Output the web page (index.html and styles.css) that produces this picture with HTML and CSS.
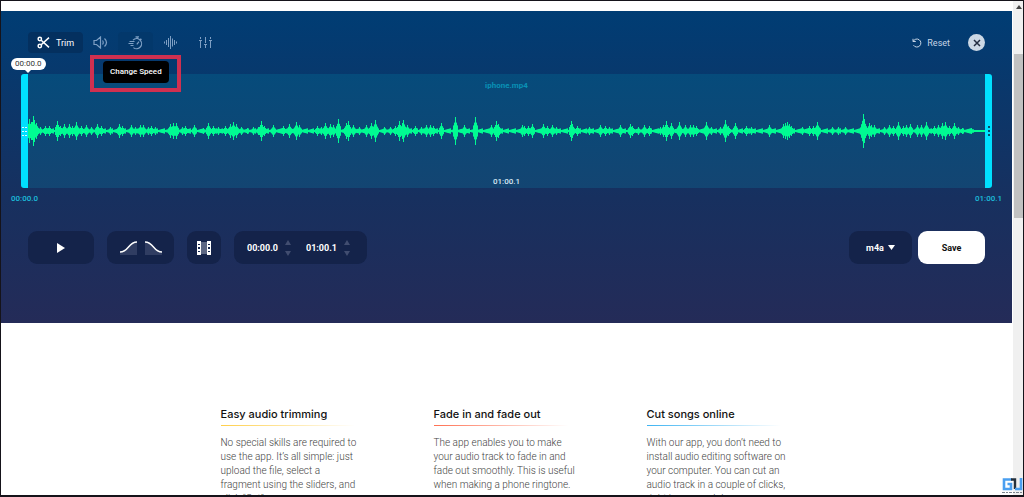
FILE: index.html
```html
<!DOCTYPE html>
<html lang="en">
<head>
<meta charset="utf-8">
<title>Audio Cutter</title>
<link rel="stylesheet" href="styles.css">
</head>
<body>
<div class="frame">
  <div class="page">
    <main class="editor">
      <div class="toolbar">
        <button class="tool tool-active" type="button">
          <svg width="13" height="13" viewBox="0 0 13 13" fill="none" stroke="#fff" stroke-width="1.5"><circle cx="2.8" cy="3" r="1.7"/><circle cx="2.8" cy="10" r="1.7"/><path d="M4.2 4.2 12 11.4M4.2 8.8 12 1.6"/></svg>
          Trim
        </button>
        <button class="tool" type="button" aria-label="Change volume">
          <svg width="15" height="13" viewBox="0 0 15 13" fill="none" stroke="currentColor" stroke-width="1.2"><path d="M1 4.5H3.5L7.5 1V12L3.5 8.5H1ZM9.5 4.5Q11 6.5 9.5 8.5M11.5 2.5Q15.5 6.5 11.5 10.5"/></svg>
        </button>
        <button class="tool tool-hover" type="button" aria-label="Change speed" aria-describedby="speed-tip">
          <svg width="15" height="14" viewBox="0 0 15 14" fill="none" stroke="currentColor" stroke-width="1.2"><path d="M5 4.2A5 5 0 1 1 5.4 11.6M7.5 .8H11M9.2 .8V2.5M12.3 2.7 13.5 3.8M1.5 5.5H6.5M.5 7.5H5.5M2.5 9.5H5.5M8.8 8.4 11 5.7"/></svg>
        </button>
        <button class="tool" type="button" aria-label="Change pitch">
          <svg width="13" height="13" viewBox="0 0 13 13" fill="none" stroke="currentColor"><path d="M.5 5.5V7.5M2.5 4V9M4.5 2V11M6.5 0V13M8.5 2.5V10.5M10.5 4V9M12.5 5.5V7.5"/></svg>
        </button>
        <button class="tool" type="button" aria-label="Equalizer">
          <svg width="13" height="13" viewBox="0 0 13 13" fill="none" stroke="currentColor"><path d="M1.5 1V3M1.5 5V12M6.5 1V7M6.5 9V12M11.5 1V3M11.5 5V12M0 4.5H3M5 8.5H8M10 4.5H13"/></svg>
        </button>
        <button class="reset" type="button">
          <svg width="10" height="10" viewBox="0 0 10 10" fill="none" stroke="currentColor"><path d="M1 .8V3.5H3.8M1.2 3.4A4 4 0 1 1 1.5 7.2"/></svg>
          Reset
        </button>
        <button class="close" type="button" aria-label="Close">
          <svg width="8" height="8" viewBox="0 0 8 8" stroke="#222c40" stroke-width="1.5"><path d="M1 1 7 7M7 1 1 7"/></svg>
        </button>
        <div class="tip-mark"><div class="tip" id="speed-tip" role="tooltip">Change Speed</div></div>
      </div>

      <div class="track">
        <span class="file">iphone.mp4</span>
        <svg class="wave" viewBox="0 0 957 114" preserveAspectRatio="none"><path id="wave" fill="none" stroke="#00fb92"/></svg>
        <span class="length">01:00.1</span>
        <div class="handle handle-start"><svg width="5" height="11" viewBox="0 0 5 11" fill="#d8fbff"><path d="M0 1h2v1H0zM3 1h2v1H3zM0 5h2v1H0zM3 5h2v1H3zM0 9h2v1H0zM3 9h2v1H3z"/></svg></div>
        <div class="handle handle-end"><svg width="5" height="11" viewBox="0 0 5 11" fill="#064a68"><path d="M2 0h2v2H2zM2 4h2v2H2zM2 8h2v2H2z"/></svg></div>
        <span class="bubble">00:00.0</span>
      </div>
      <div class="range"><span>00:00.0</span><span>01:00.1</span></div>

      <div class="controls">
        <button class="ctl play" type="button" aria-label="Play"><svg width="8" height="10" viewBox="0 0 8 10" fill="#fff"><path d="M0 0 8 5 0 10Z"/></svg></button>
        <div class="ctl fades">
          <button class="plain" type="button" aria-label="Fade in"><svg width="17" height="14" viewBox="0 0 17 14" fill="none"><path d="M0 11C9 11 8 1 17 1V14H0Z" fill="#303d62"/><path d="M0 11C9 11 8 1 17 1" stroke="#fff" stroke-width="1.4"/></svg></button>
          <button class="plain" type="button" aria-label="Fade out"><svg width="17" height="14" viewBox="0 0 17 14" fill="none"><path d="M0 1C9 1 8 11 17 11V14H0Z" fill="#303d62"/><path d="M0 1C9 1 8 11 17 11" stroke="#fff" stroke-width="1.4"/></svg></button>
        </div>
        <button class="ctl film" type="button" aria-label="Video"><svg width="14" height="14" viewBox="0 0 14 14"><path d="M3 1H11V13H3Z" fill="#5c6784"/><path d="M0 0H4V14H0ZM10 0H14V14H10Z" fill="#fff"/><path d="M1 3h2v1H1zM1 6h2v2H1zM1 10h2v1H1zM11 3h2v1h-2zM11 6h2v2h-2zM11 10h2v1h-2z" fill="#17274f"/></svg></button>
        <div class="ctl times">
          <input class="time" aria-label="Start" value="00:00.0">
          <svg width="6" height="16" viewBox="0 0 6 16" fill="#414d70"><path d="M3 0 6 5H0ZM3 16 6 11H0Z"/></svg>
          <input class="time time-end" aria-label="End" value="01:00.1">
          <svg width="6" height="16" viewBox="0 0 6 16" fill="#414d70"><path d="M3 0 6 5H0ZM3 16 6 11H0Z"/></svg>
        </div>
        <button class="ctl format" type="button" aria-haspopup="listbox">m4a <svg width="7" height="5" viewBox="0 0 7 5" fill="#fff"><path d="M0 0H7L3.5 5Z"/></svg></button>
        <button class="ctl save" type="button">Save</button>
      </div>
    </main>

    <section class="features">
      <article class="feature">
        <h2>Easy audio trimming</h2>
        <div class="rule rule-yellow"></div>
        <p>No special skills are required to use the app. It’s all simple: just upload the file, select a<br>fragment using the sliders, and click “Cut”.</p>
      </article>
      <article class="feature">
        <h2>Fade in and fade out</h2>
        <div class="rule rule-red"></div>
        <p>The app enables you to make your audio track to fade in and fade out smoothly. This is useful when making a phone ringtone.</p>
      </article>
      <article class="feature">
        <h2>Cut songs online</h2>
        <div class="rule rule-blue"></div>
        <p>With our app, you don’t need to install audio editing software on your computer. You can cut an audio track in a couple of clicks, right in your web browser.</p>
      </article>
    </section>
  </div>
  <div class="scrollbar"><svg class="arrow" width="6" height="4" viewBox="0 0 6 4" fill="#444"><path d="M3 0 6 4H0Z"/></svg><div class="thumb"></div></div>
  <svg class="badge" width="21" height="17" viewBox="0 0 21 17" fill="none"><path d="M10 1.5H2V11H9V6H5.5" stroke="#4a9ff0" stroke-width="2.6"/><path d="M9 1.5H13V11" stroke="#25303c" stroke-width="2.4"/><path d="M19 0V11H13" stroke="#4a9ff0" stroke-width="2.6"/><path d="M0 14.5H20" stroke="#7b858f" stroke-width="1" stroke-dasharray="3 1 2 1"/></svg>
</div>
<script src="wave.js"></script>
</body>
</html>
```
FILE: styles.css
```css
* { box-sizing: border-box; }
body {
  margin: 0;
  font-family: Roboto, "Liberation Sans", sans-serif;
  font-size: 9px;
  color: #111;
  background: #fff;
}
button, input { font: inherit; color: inherit; border: 0; padding: 0; margin: 0; background: none; }
svg { display: block; flex: none; }
h2, p { margin: 0; }

.frame {
  position: relative;
  display: flex;
  height: 100vh;
  border: 1px solid #15131a;
  border-bottom-width: 2px;
  overflow: hidden;
}
.page { flex: 1; min-width: 0; padding-top: 10px; overflow: hidden; }

.editor {
  padding: 21px 27px 59px;
  background: linear-gradient(#003d74, #17305f 60%, #242b58);
}
.toolbar { position: relative; display: flex; align-items: center; height: 21px; color: #7e9fc4; }
.tool { display: flex; align-items: center; justify-content: center; width: 35px; height: 21px; border-radius: 4px; }
.tool-active { gap: 6px; width: 55px; color: #fff; background: #04305f; }
.tool-hover { background: #03386b; }
.reset { display: flex; align-items: center; gap: 5px; margin-left: auto; color: #c6d5e6; }
.close {
  display: flex; align-items: center; justify-content: center;
  width: 17px; height: 17px; margin-left: 18px; border-radius: 50%; background: #ccd8e5;
}
.tip-mark { position: absolute; z-index: 2; left: 62px; top: 23px; padding: 2px 8px 5px 9px; border: 4px solid #cf3050; }
.tip { padding: 0 7px; line-height: 22px; border-radius: 4px; background: #000; color: #fff; font-size: 8px; font-weight: 500; white-space: nowrap; }

.track {
  position: relative;
  display: flex; flex-direction: column; align-items: center; justify-content: space-between;
  height: 114px; margin-top: 21px; padding: 7px 0 1px;
  background: linear-gradient(#064b7b, #134572);
}
.file { color: #0991b5; font-size: 8px; font-weight: 700; line-height: 10px; }
.length { color: #d5e8f4; font-size: 8px; font-weight: 500; line-height: 10px; }
.wave { position: absolute; left: 0; top: 0; width: 100%; height: 100%; }
.handle { position: absolute; top: 0; bottom: 0; width: 7px; display: flex; align-items: center; justify-content: center; background: #00e0ff; }
.handle-start { right: 100%; border-radius: 3px 0 0 3px; }
.handle-end { left: 100%; border-radius: 0 3px 3px 0; }
.bubble {
  position: absolute; left: -17px; bottom: 100%; margin-bottom: 4px; padding: 0 4px;
  border-radius: 6px; background: #fff; color: #333; font-size: 8px; line-height: 12px;
}
.bubble::after { content: ""; position: absolute; left: 14px; top: 100%; border: 3px solid transparent; border-top-color: #fff; border-bottom: 0; }
.range { display: flex; justify-content: space-between; margin: 5px -17px 0; color: #1bbedb; font-size: 8px; font-weight: 500; line-height: 12px; }

.controls { display: flex; height: 33px; margin-top: 26px; color: #fff; font-weight: 700; }
.ctl { display: flex; align-items: center; justify-content: center; border-radius: 9px; background: #14234a; }
.play { width: 66px; }
.fades { gap: 8px; width: 67px; margin-left: 13px; }
.film { width: 34px; margin-left: 13px; }
.times { width: 133px; margin-left: 13px; padding: 0 16px 0 13px; justify-content: flex-start; }
.time { width: 38px; height: 20px; font-size: 9px; }
.time-end { margin-left: 15px; }
.format { gap: 4px; width: 63px; margin-left: auto; }
.save { width: 67px; margin-left: 6px; background: #fff; color: #111; }

.features {
  display: grid; grid-template-columns: repeat(3, 1fr); column-gap: 67px;
  max-width: 572px; margin: 0 auto; padding-top: 84px;
}
.feature h2 { font-family: Inter, sans-serif; font-size: 11px; font-weight: 500; line-height: 14px; white-space: nowrap; }
.rule { height: 1px; margin: 4px 12px 10px 0; }
.rule-yellow { background: linear-gradient(90deg, #ffcf4a, #fff); }
.rule-red { background: linear-gradient(90deg, #ff7052, #fff); }
.rule-blue { background: linear-gradient(90deg, #3fb4f2, #fff); }
.feature p { font-size: 10px; font-weight: 300; line-height: 14px; color: #444; }

.scrollbar { flex: none; width: 11px; padding-left: 1px; background: #f0f0f0; border-left: 1px solid #fff; }
.arrow { margin: 4px auto 0 2px; }
.thumb { height: 164px; margin-top: 45px; background: #c1c1c1; }
.badge { position: absolute; right: 0; bottom: 0; }
```
FILE: wave.js
```js
// Loudness peaks as [position, half height] pairs.
const start = 28;
const peaks = [[29,12],[31,9],[33,15],[34,11],[36,8],[40,4],[45,5],[49,5],[57,10],[60,5],[64,7],[69,7],[72,5],[76,9],[81,5],[86,6],[91,4],[97,7],[101,5],[110,4],[119,7],[122,5],[131,6],[135,4],[140,6],[143,6],[148,4],[151,5],[155,4],[170,7],[173,8],[176,8],[182,4],[185,5],[194,6],[203,3],[208,8],[213,5],[218,4],[225,5],[230,7],[233,9],[236,7],[241,4],[247,3],[253,4],[258,4],[261,10],[264,5],[273,6],[283,5],[289,7],[296,9],[299,6],[317,5],[321,4],[325,8],[330,7],[333,6],[338,12],[346,8],[348,10],[353,6],[359,4],[366,6],[371,8],[375,11],[384,4],[390,4],[395,5],[399,10],[402,8],[403,11],[407,6],[415,5],[421,4],[426,6],[430,6],[433,5],[441,8],[455,14],[464,6],[475,14],[491,6],[496,10],[498,7],[522,6],[524,5],[528,5],[532,7],[543,7],[547,5],[552,6],[556,4],[571,10],[572,7],[577,5],[589,4],[600,6],[605,5],[609,4],[620,6],[630,7],[632,5],[638,4],[644,6],[649,5],[660,4],[663,6],[666,10],[671,8],[679,9],[685,6],[690,6],[693,6],[696,5],[706,9],[711,4],[720,4],[725,11],[728,5],[735,8],[746,5],[751,4],[769,6],[783,7],[785,8],[787,9],[789,7],[791,5],[802,4],[809,5],[813,5],[817,9],[832,4],[838,4],[845,4],[862,9],[863,17],[864,12],[869,8],[871,6],[874,6],[884,4],[889,6],[893,5],[898,9],[903,5],[906,6],[910,7],[917,6],[921,6],[926,9],[934,5],[938,6],[942,8],[945,9],[949,5],[954,8],[958,4],[962,3],[971,3]];
const level = new Array(957).fill(0);
level.forEach((_, i) => {
  level[i] = i > 945 ? 1 : 1 + ((i * 7919) % 13) / 7;
});
for (const [x, h] of peaks) {
  for (let d = -2; d <= 2; d++) {
    const i = x - start + d;
    const share = [1, 0.6, 0.4][Math.abs(d)];
    if (i >= 0 && i < 957) level[i] = Math.max(level[i], h * share);
  }
}
document.getElementById("wave").setAttribute("d",
  level.map((h, i) => `M${i + 0.5} ${(57 - h).toFixed(1)}V${(57 + h).toFixed(1)}`).join(""));
```
